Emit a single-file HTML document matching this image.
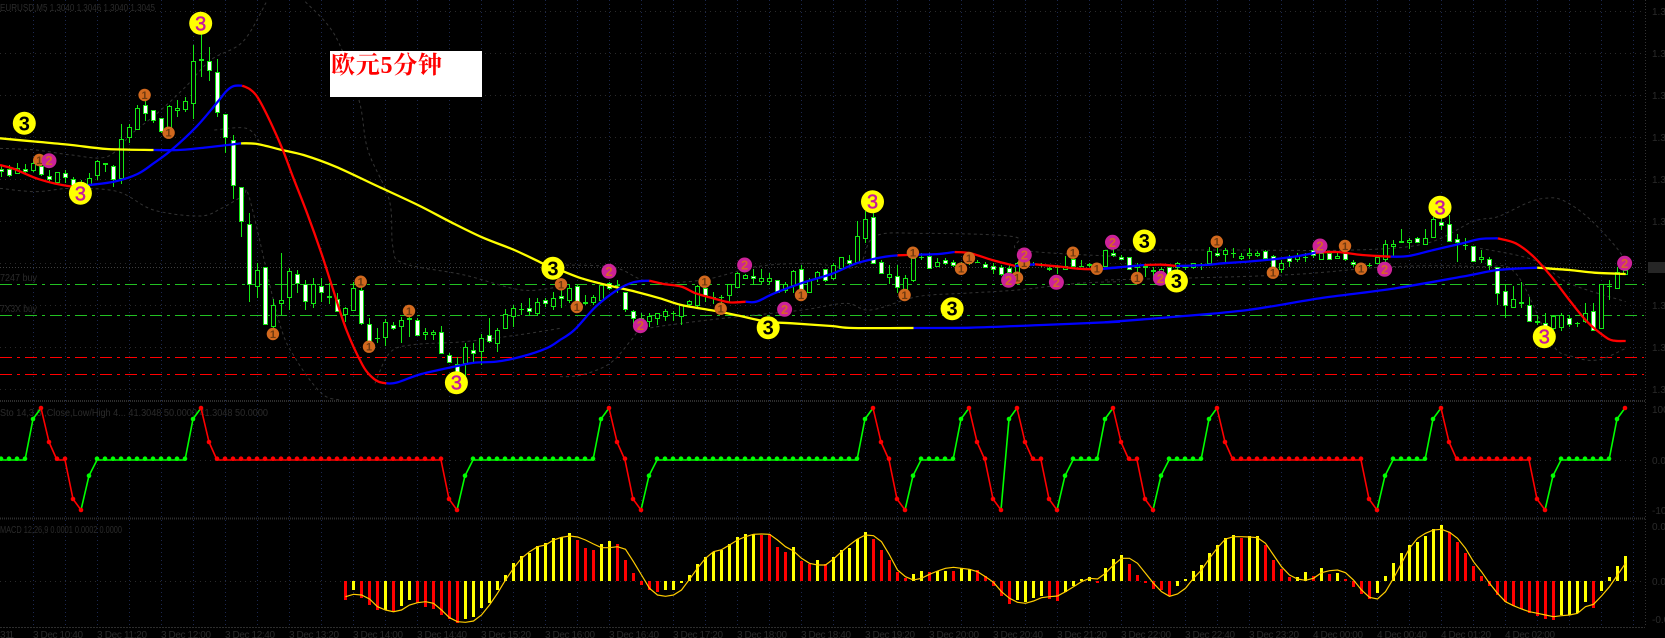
<!DOCTYPE html>
<html><head><meta charset="utf-8"><title>欧元5分钟</title>
<style>
html,body{margin:0;padding:0;background:#000;width:1665px;height:638px;overflow:hidden}
svg{position:absolute;left:0;top:0;display:block}
.lab{font:10px "Liberation Sans",sans-serif;fill:#2b2b2b}
.ma{fill:none;stroke-width:2.3;stroke-linejoin:round;vector-effect:non-scaling-stroke}
.bb{fill:none;stroke:#333;stroke-width:1;stroke-dasharray:3 3;vector-effect:non-scaling-stroke}
.y circle{fill:#ff0}
.y text{font:bold 20px "Liberation Sans",sans-serif;text-anchor:middle;fill:#000}
.y.m text{fill:#c8189c;font-weight:normal;stroke:#c8189c;stroke-width:.5}
.o circle{fill:#d2691e}
.o text{font:bold 11px "Liberation Sans",sans-serif;text-anchor:middle;fill:#6e3a10}
.p circle{fill:#cc2299}
.p text{font:bold 13px "Liberation Sans",sans-serif;text-anchor:middle;fill:#d8642a}
</style></head><body>
<svg width="1665" height="638" viewBox="0 0 1665 638" xmlns="http://www.w3.org/2000/svg">
<rect width="1665" height="638" fill="#000"/>
<g id="grid"></g>
<text class="lab" x="0" y="11" textLength="155" lengthAdjust="spacingAndGlyphs">EURUSD,M5 1.3040 1.3046 1.3040 1.3045</text>
<text class="lab" x="0" y="281" textLength="37" lengthAdjust="spacingAndGlyphs">7247 buy</text>
<text class="lab" x="0" y="312" textLength="37" lengthAdjust="spacingAndGlyphs">7X3X buy</text>
<text class="lab" x="0" y="416" textLength="268" lengthAdjust="spacingAndGlyphs">Sto 14,3,3 ,Close,Low/High 4... 41.3048 50.0000 41.3048 50.0000</text>
<text class="lab" x="0" y="533" textLength="122" lengthAdjust="spacingAndGlyphs">MACD 12,26,9 0.0001 0.0002 0.0000</text>
<g class="lab">
<text x="1652" y="15">1.30</text><text x="1652" y="57">1.30</text><text x="1652" y="99">1.30</text><text x="1652" y="141">1.30</text><text x="1652" y="183">1.30</text><text x="1652" y="225">1.30</text><text x="1652" y="309">1.30</text><text x="1652" y="351">1.30</text><text x="1652" y="393">1.30</text>
<text x="1652" y="413">100</text><text x="1652" y="464">0.00</text><text x="1652" y="514">-100</text>
<text x="1652" y="530">0.0</text><text x="1652" y="585">0.00</text><text x="1652" y="623">-0.0</text>
<text x="0" y="638" textLength="14">3 11</text><text x="33" y="638" textLength="50">3 Dec 10:40</text><text x="97" y="638" textLength="50">3 Dec 11:20</text><text x="161" y="638" textLength="50">3 Dec 12:00</text><text x="225" y="638" textLength="50">3 Dec 12:40</text><text x="289" y="638" textLength="50">3 Dec 13:20</text><text x="353" y="638" textLength="50">3 Dec 14:00</text><text x="417" y="638" textLength="50">3 Dec 14:40</text><text x="481" y="638" textLength="50">3 Dec 15:20</text><text x="545" y="638" textLength="50">3 Dec 16:00</text><text x="609" y="638" textLength="50">3 Dec 16:40</text><text x="673" y="638" textLength="50">3 Dec 17:20</text><text x="737" y="638" textLength="50">3 Dec 18:00</text><text x="801" y="638" textLength="50">3 Dec 18:40</text><text x="865" y="638" textLength="50">3 Dec 19:20</text><text x="929" y="638" textLength="50">3 Dec 20:00</text><text x="993" y="638" textLength="50">3 Dec 20:40</text><text x="1057" y="638" textLength="50">3 Dec 21:20</text><text x="1121" y="638" textLength="50">3 Dec 22:00</text><text x="1185" y="638" textLength="50">3 Dec 22:40</text><text x="1249" y="638" textLength="50">3 Dec 23:20</text><text x="1313" y="638" textLength="50">4 Dec 00:00</text><text x="1377" y="638" textLength="50">4 Dec 00:40</text><text x="1441" y="638" textLength="50">4 Dec 01:20</text><text x="1505" y="638" textLength="50">4 Dec 02:00</text>
</g>
<rect x="1648" y="262" width="17" height="11" fill="#262626"/>
<!-- level lines -->
<g fill="none" stroke-width="1" stroke-dasharray="12 5 3 5" shape-rendering="crispEdges">
<path d="M0 284.5H1644M0 315.5H1644" stroke="#22c022"/>
<path d="M0 357.5H1644M0 374.5H1644" stroke="#f00"/>
</g>
<path d="M0 267.5H1644" stroke="#404040" stroke-dasharray="1 2" fill="none" shape-rendering="crispEdges"/>
<!-- bollinger bands -->
<g transform="scale(.35714 .33333)">
<polyline class="bb" points="0,445 100,450 200,465 300,470 370,400 440,340 520,260 590,180 680,125 745,8"/>
<polyline class="bb" points="855,5 940,110 1005,300 1030,450 1090,600 1100,740 1130,790 1300,825 1460,870 1568,860"/>
<polyline class="bb" points="0,565 100,575 200,565 330,575 430,630 560,648 620,625 680,590 700,600 780,960 830,1080 900,1180 950,1200"/>
<polyline class="bb" points="1050,1150 1090,1060 1150,1035 1300,1025 1450,1005 1568,985"/>
<polyline class="bb" points="600,390 690,385 730,430"/>
</g>
<g transform="translate(560 150) scale(.35714 .33333)">
<polyline class="bb" points="0,345 150,352 250,395 400,390 550,350 700,340 830,350 880,260 1010,250 1270,260 1290,300 1568,320"/>
<polyline class="bb" points="0,680 60,675 140,640 200,570 230,540 340,520 500,500 680,480 800,460 870,480 1000,440 1130,430 1280,420 1450,400 1568,395"/>
</g>
<g transform="translate(1105 150) scale(.35714 .33333)">
<polyline class="bb" points="0,300 350,300 700,300 900,280 1030,215 1100,200 1180,160 1230,145 1280,150 1350,200 1430,290 1460,340"/>
<polyline class="bb" points="0,390 500,375 800,350 1050,350 1150,370 1250,580 1310,620 1380,630 1458,595"/>
<polyline class="bb" points="1050,295 1200,330 1300,400 1458,455"/>
</g>
<g id="candles" shape-rendering="crispEdges"></g>
<!-- moving averages -->
<g transform="scale(.35714 .33333)">
<polyline class="ma" stroke="#ff0" points="0,415 100,425 200,435 300,447 430,450"/>
<polyline class="ma" stroke="#00f" points="430,450 500,450 580,442 675,430"/>
<polyline class="ma" stroke="#ff0" points="675,430 720,432 790,450 850,465 940,500 1050,555 1170,615 1260,665 1350,712 1440,750 1515,788 1568,816"/>
<polyline class="ma" stroke="#f00" points="0,495 40,507 110,538 190,558 230,558"/>
<polyline class="ma" stroke="#00f" points="230,558 250,555 320,545 385,522 430,490 480,450 550,380 610,305 635,272 655,258 678,257"/>
<polyline class="ma" stroke="#f00" points="678,257 700,268 720,290 750,350 790,445 820,530 860,640 900,760 930,860 970,990 1015,1095 1040,1130 1060,1145 1082,1150"/>
<polyline class="ma" stroke="#00f" points="1082,1150 1110,1148 1180,1122 1280,1098 1330,1088 1390,1085 1460,1070 1530,1045 1568,1020"/>
</g>
<g transform="translate(560 150) scale(.35714 .33333)">
<polyline class="ma" stroke="#ff0" points="0,360 60,385 130,405 200,422 280,445 340,465 430,482 500,497 580,515 650,520 760,528 820,534 990,534"/>
<polyline class="ma" stroke="#00f" points="990,534 1150,533 1350,525 1568,515"/>
<polyline class="ma" stroke="#00f" points="0,570 40,540 100,470 160,420 205,397 250,392"/>
<polyline class="ma" stroke="#f00" points="250,392 290,402 340,410 380,430 430,445 475,457 520,455"/>
<polyline class="ma" stroke="#00f" points="520,455 550,455 600,430 680,398 760,372 830,340 900,322 945,316"/>
<polyline class="ma" stroke="#f00" points="945,316 1000,314"/>
<polyline class="ma" stroke="#00f" points="1000,314 1060,312 1105,306"/>
<polyline class="ma" stroke="#f00" points="1105,306 1150,310 1210,330 1275,348"/>
<polyline class="ma" stroke="#00f" points="1275,348 1330,343"/>
<polyline class="ma" stroke="#f00" points="1330,343 1350,345 1400,350 1450,356 1505,358"/>
<polyline class="ma" stroke="#00f" points="1505,358 1568,352"/>
</g>
<g transform="translate(1105 150) scale(.35714 .33333)">
<polyline class="ma" stroke="#00f" points="0,517 200,500 400,480 600,445 800,417 1000,380 1100,360 1210,353"/>
<polyline class="ma" stroke="#ff0" points="1210,353 1300,360 1370,368 1458,372"/>
<polyline class="ma" stroke="#00f" points="0,355 60,350 110,345"/>
<polyline class="ma" stroke="#f00" points="110,345 160,344 200,348"/>
<polyline class="ma" stroke="#00f" points="200,348 280,345 330,340 400,335 470,328 530,320 590,308"/>
<polyline class="ma" stroke="#f00" points="590,308 650,306 720,315 800,320"/>
<polyline class="ma" stroke="#00f" points="800,320 850,318 920,300 1000,280 1050,267 1100,265"/>
<polyline class="ma" stroke="#f00" points="1100,265 1150,280 1200,320 1250,380 1300,450 1350,515 1400,560 1425,572 1458,573"/>
</g>
<!-- orange markers -->
<g class="o" transform="translate(144.6 95)"><circle r="6.2"/><text y="4">1</text></g>
<g class="o" transform="translate(168.6 132.7)"><circle r="6.2"/><text y="4">1</text></g>
<g class="o" transform="translate(39.3 160)"><circle r="6.2"/><text y="4">1</text></g>
<g class="o" transform="translate(360.7 281.7)"><circle r="6.2"/><text y="4">1</text></g>
<g class="o" transform="translate(409 311)"><circle r="6.2"/><text y="4">1</text></g>
<g class="o" transform="translate(272.9 334)"><circle r="6.2"/><text y="4">1</text></g>
<g class="o" transform="translate(369 346.7)"><circle r="6.2"/><text y="4">1</text></g>
<g class="o" transform="translate(561 284.3)"><circle r="6.2"/><text y="4">1</text></g>
<g class="o" transform="translate(576.8 307)"><circle r="6.2"/><text y="4">1</text></g>
<g class="o" transform="translate(704.6 281.7)"><circle r="6.2"/><text y="4">1</text></g>
<g class="o" transform="translate(720.7 308.7)"><circle r="6.2"/><text y="4">1</text></g>
<g class="o" transform="translate(801 295)"><circle r="6.2"/><text y="4">1</text></g>
<g class="o" transform="translate(904.6 295)"><circle r="6.2"/><text y="4">1</text></g>
<g class="o" transform="translate(912.9 252.7)"><circle r="6.2"/><text y="4">1</text></g>
<g class="o" transform="translate(969 258)"><circle r="6.2"/><text y="4">1</text></g>
<g class="o" transform="translate(961 268.7)"><circle r="6.2"/><text y="4">1</text></g>
<g class="o" transform="translate(1017 277.7)"><circle r="6.2"/><text y="4">1</text></g>
<g class="o" transform="translate(1024 263)"><circle r="6.2"/><text y="4">1</text></g>
<g class="o" transform="translate(1072.9 252.7)"><circle r="6.2"/><text y="4">1</text></g>
<g class="o" transform="translate(1096.8 268.7)"><circle r="6.2"/><text y="4">1</text></g>
<g class="o" transform="translate(1137 278)"><circle r="6.2"/><text y="4">1</text></g>
<g class="o" transform="translate(1216.8 241.7)"><circle r="6.2"/><text y="4">1</text></g>
<g class="o" transform="translate(1272.9 272.7)"><circle r="6.2"/><text y="4">1</text></g>
<g class="o" transform="translate(1345 246)"><circle r="6.2"/><text y="4">1</text></g>
<g class="o" transform="translate(1361 268.7)"><circle r="6.2"/><text y="4">1</text></g>
<!-- magenta markers -->
<g class="p" transform="translate(49 160.7)"><circle r="7.5"/><text y="4.5">2</text></g>
<g class="p" transform="translate(609 271.3)"><circle r="7.5"/><text y="4.5">2</text></g>
<g class="p" transform="translate(744.6 265)"><circle r="7.5"/><text y="4.5">2</text></g>
<g class="p" transform="translate(640.4 325.7)"><circle r="7.5"/><text y="4.5">2</text></g>
<g class="p" transform="translate(784.6 309.3)"><circle r="7.5"/><text y="4.5">2</text></g>
<g class="p" transform="translate(1008.6 280.3)"><circle r="7.5"/><text y="4.5">2</text></g>
<g class="p" transform="translate(1024.3 255)"><circle r="7.5"/><text y="4.5">2</text></g>
<g class="p" transform="translate(1056.4 282.3)"><circle r="7.5"/><text y="4.5">2</text></g>
<g class="p" transform="translate(1112.5 242.3)"><circle r="7.5"/><text y="4.5">2</text></g>
<g class="p" transform="translate(1160.4 278.3)"><circle r="7.5"/><text y="4.5">2</text></g>
<g class="p" transform="translate(1320 246)"><circle r="7.5"/><text y="4.5">2</text></g>
<g class="p" transform="translate(1384.6 269.3)"><circle r="7.5"/><text y="4.5">2</text></g>
<g class="p" transform="translate(1624.6 263.3)"><circle r="7.5"/><text y="4.5">2</text></g>
<!-- yellow markers -->
<g class="y m" transform="translate(200.7 23.3)"><circle r="11.5"/><text y="7">3</text></g>
<g class="y" transform="translate(24.3 123.3)"><circle r="11.5"/><text y="7">3</text></g>
<g class="y m" transform="translate(80.4 193.3)"><circle r="11.5"/><text y="7">3</text></g>
<g class="y" transform="translate(552.9 268.3)"><circle r="11.5"/><text y="7">3</text></g>
<g class="y m" transform="translate(456.4 382.7)"><circle r="11.5"/><text y="7">3</text></g>
<g class="y m" transform="translate(872.5 201.7)"><circle r="11.5"/><text y="7">3</text></g>
<g class="y" transform="translate(768.2 327.7)"><circle r="11.5"/><text y="7">3</text></g>
<g class="y" transform="translate(952.1 308.7)"><circle r="11.5"/><text y="7">3</text></g>
<g class="y" transform="translate(1144.3 241)"><circle r="11.5"/><text y="7">3</text></g>
<g class="y" transform="translate(1176.4 281)"><circle r="11.5"/><text y="7">3</text></g>
<g class="y m" transform="translate(1440 207.3)"><circle r="11.5"/><text y="7">3</text></g>
<g class="y m" transform="translate(1544.3 336.7)"><circle r="11.5"/><text y="7">3</text></g>
<!-- title box -->
<rect x="330" y="51" width="152" height="46" fill="#fff"/>
<text x="331" y="73" font-size="24" font-weight="700" fill="#f00" textLength="111" font-family="'Liberation Serif','Noto Serif CJK SC',serif">欧元5分钟</text>
<g id="stoch"></g>
<g id="macd"></g>
</svg>
<script>
(function(){
var NS='http://www.w3.org/2000/svg';
function el(p,n,a){var e=document.createElementNS(NS,n);for(var k in a)e.setAttribute(k,a[k]);document.getElementById(p).appendChild(e);return e;}
function X(i){return 1+8*i;}
/* smooth moving averages and bands */
Array.prototype.slice.call(document.querySelectorAll('polyline.ma,polyline.bb')).forEach(function(pl){
 var p=pl.getAttribute('points').split(' ').map(function(s){return s.split(',').map(Number);});
 var d='M'+p[0][0]+' '+p[0][1];
 for(var i=0;i<p.length-1;i++){
  var a=p[Math.max(i-1,0)],b=p[i],c=p[i+1],e=p[Math.min(i+2,p.length-1)];
  d+='C'+(b[0]+(c[0]-a[0])/6).toFixed(1)+' '+(b[1]+(c[1]-a[1])/6).toFixed(1)+' '+(c[0]-(e[0]-b[0])/6).toFixed(1)+' '+(c[1]-(e[1]-b[1])/6).toFixed(1)+' '+c[0]+' '+c[1];
 }
 var q=document.createElementNS(NS,'path');
 q.setAttribute('d',d);q.setAttribute('class',pl.getAttribute('class'));
 if(pl.getAttribute('stroke'))q.setAttribute('stroke',pl.getAttribute('stroke'));
 pl.parentNode.replaceChild(q,pl);
});
/* grid */
var d='';
for(var k=1;k<=51;k++){d+='M'+(1+32*k+.5)+' 0V627';}
el('grid','path',{d:d,stroke:'#1c2850','stroke-dasharray':'1 3',fill:'none','shape-rendering':'crispEdges'});
d='';
[11,53,95,137,179,221,263,305,347,389,460,581].forEach(function(y){d+='M0 '+(y+.5)+'H1645';});
el('grid','path',{d:d,stroke:'#2a2a2a','stroke-dasharray':'1 4',fill:'none','shape-rendering':'crispEdges'});
el('grid','path',{d:'M1645.5 0V627',stroke:'#333','stroke-dasharray':'1 2',fill:'none','shape-rendering':'crispEdges'});
el('grid','path',{d:'M0 401H1645M0 518.5H1645',stroke:'#2e2e2e','stroke-width':2,'stroke-dasharray':'1 1',fill:'none','shape-rendering':'crispEdges'});
el('grid','path',{d:'M0 627.5H1645',stroke:'#2e2e2e','stroke-dasharray':'2 1',fill:'none','shape-rendering':'crispEdges'});
/* candles */
var A=[[495,508,514,530,1],[495,508,526,532,1],[490,505,520,522,0],[493,508,514,520,1],[480,488,510,515,0],[480,497,522,527,1],[510,527,538,545,1],[515,515,545,545,0],[510,520,532,550,1],[530,538,555,560,1],[540,545,565,570,1],[520,533,555,560,0],[480,482,525,540,0],[488,488,491,515,0],[495,499,538,560,1],[373,418,533,552,0],[372,382,412,430,0],[315,325,388,390,0],[285,316,338,362,1],[331,331,361,368,1],[355,355,394,400,1],[315,317,385,395,0],[300,325,331,350,0],[292,304,326,335,0],[135,184,310,356,0],[100,178,180,230,0],[142,184,211,242,1],[178,217,337,350,1],[343,343,412,458,1],[405,419,556,597,1],[562,562,664,710,1],[640,671,853,905,1],[790,809,859,895,0],[802,802,973,975,1],[897,916,979,985,0],[760,899,910,945,0],[805,814,892,930,0],[810,821,848,880,1],[840,853,904,930,1],[835,853,910,925,0],[835,859,877,905,1],[850,887,891,912,0],[880,898,934,935,1],[920,923,941,965,0],[845,865,929,930,0],[855,871,968,975,1],[955,973,1027,1040,1],[985,1015,1015,1030,0],[958,967,1012,1037,0],[965,974,985,990,1],[950,961,979,1030,0],[940,955,957,1010,0],[955,961,1004,1004,1],[985,997,1003,1020,0],[990,997,1003,1020,0],[978,997,1060,1062,1],[1060,1066,1087,1090,1],[1070,1093,1115,1135,1],[1030,1042,1090,1130,0],[1030,1049,1060,1090,1],[1003,1013,1054,1095,0],[955,1006,1024,1028,1],[985,991,1030,1055,0],[928,941,985,985,0],[915,923,947,980,0],[910,928,928,945,0],[895,923,933,947,1],[895,905,940,947,0],[895,900,910,922,1],[877,893,917,930,0]];
var B=[[405,437,443,475,1],[405,415,450,460,0],[405,408,455,485,1],[435,455,460,465,1],[435,442,455,465,0],[400,405,450,450,0],[395,400,415,420,1],[390,405,405,430,0],[427,427,478,485,1],[480,484,505,525,1],[490,505,505,530,0],[490,497,512,530,0],[490,490,505,525,0],[477,484,497,513,0],[483,490,490,513,0],[462,466,497,525,0],[450,454,462,470,0],[405,408,466,470,0],[405,415,435,455,1],[425,440,440,462,0],[435,441,441,460,0],[403,403,436,455,0],[365,370,410,415,0],[372,375,385,385,0],[358,379,385,405,1],[358,385,392,403,0],[370,385,392,403,0],[391,391,425,430,1],[395,403,420,430,0],[360,363,405,430,0],[345,358,420,430,1],[385,391,425,430,0],[362,365,385,395,0],[358,358,391,395,1],[340,346,385,390,0],[320,322,353,355,0],[315,329,340,345,1],[212,259,335,337,0],[182,208,265,280,0],[190,202,340,342,1],[330,335,370,372,1],[345,371,380,403,0],[345,379,410,428,1],[375,385,417,430,0],[310,325,391,395,0],[310,320,320,330,0],[310,317,353,355,1],[325,335,347,352,0],[325,329,340,345,1],[330,335,345,350,1],[335,340,350,355,0],[330,335,340,345,0],[330,335,335,340,0],[335,341,352,355,1],[340,347,357,372,1],[345,352,372,378,1],[345,353,365,390,1],[335,340,365,370,0],[338,343,347,352,0],[335,341,341,348,0],[338,341,345,350,0],[350,353,358,362,1],[345,350,350,372,0],[318,347,358,360,0],[318,328,347,352,1],[330,347,347,352,0],[338,341,346,350,1],[340,350,355,360,0],[300,300,347,352,0],[290,310,315,320,1],[315,322,328,330,1],[322,322,358,360,1],[340,345,352,365,0],[345,347,350,380,0],[350,360,364,385,0],[350,358,365,375,0],[350,352,372,375,1],[335,340,350,360,0],[345,350,350,360,0],[338,340,352,358,0],[340,345,345,360,0],[290,302,340,345,0],[295,310,315,320,1],[295,300,311,335,0],[295,310,310,325,0],[310,317,324,330,0],[293,310,316,328,0],[303,310,316,320,0],[300,302,323,325,1],[315,317,360,385,1],[330,340,358,370,0],[315,323,334,352,1],[310,317,328,335,0],[310,322,322,335,0],[295,300,315,325,1],[300,310,328,330,0],[308,310,328,330,1],[305,317,323,328,0],[300,310,328,333,1],[330,335,341,352,1],[338,345,345,352,0],[340,345,345,350,0],[318,322,340,342,0],[270,283,328,340,0],[270,283,289,320,0],[238,272,277,280,0],[265,270,277,297,0],[260,265,277,280,1],[238,265,283,285,0],[200,208,260,262,0],[205,215,226,240,1],[195,222,272,272,1],[252,266,277,335,1],[265,284,284,300,0],[288,289,334,335,1],[300,322,328,340,0],[322,328,346,360,1],[352,352,428,465,1],[403,422,466,505,1],[408,448,472,475,0],[397,455,460,475,0],[440,466,512,515,1],[495,512,516,525,0],[490,518,535,545,1],[495,497,535,540,0],[490,495,530,542,0],[495,505,523,530,1],[515,518,518,530,0],[460,490,512,520,0],[460,484,540,542,1],[403,403,535,536,0],[390,408,408,450,0],[350,365,415,415,0],[350,360,372,375,0]];
var G='',W='',K='';
function add(arr,off,start){
 arr.forEach(function(c,n){
  var x=X(start+n),t=Math.round(off+c[0]/3),a=Math.round(off+c[1]/3),b=Math.round(off+c[2]/3),e=Math.round(off+c[3]/3);
  G+='M'+x+' '+t+'h1V'+e+'h-1z';
  if(b-a<1){G+='M'+(x-2)+' '+a+'h5v1h-5z';return;}
  G+='M'+(x-2)+' '+a+'h5V'+(b+1)+'h-5z';
  if(b-a>=2){var s='M'+(x-1)+' '+(a+1)+'h3V'+b+'h-3z';if(c[4])W+=s;else K+=s;}
 });
}
add(A,0,0);add(B,150,70);
el('candles','path',{d:G,fill:'#14e814'});
el('candles','path',{d:K,fill:'#000'});
el('candles','path',{d:W,fill:'#fff'});
/* stochastic */
function rep(c,n){return new Array(n+1).join(c);}
var S='gggg'+'HTUrrDBL'+rep('g',12)+'HTU'+rep('r',29)+'DBL'+rep('g',16)+'HTUrDBL'+rep('g',26)+'HTUrDBL'+rep('g',5)+'HTUrDBHTUrrDBL'+rep('g',4)+'HTUrrDBL'+rep('g',5)+'HTU'+rep('r',17)+'DBL'+rep('g',5)+'HTU'+rep('r',10)+'DBL'+rep('g',7)+'HT';
var L={T:408,H:419,U:442,g:460,r:460,L:475.7,D:499,B:510};
var segG='',segR='';
for(var i=0;i<S.length-1;i++){
 var y1=L[S[i]],y2=L[S[i+1]],s='M'+X(i)+' '+y1+'L'+X(i+1)+' '+y2;
 var up=y2<y1,flat=y1==y2;
 if(up||(flat&&S[i]=='g'))segG+=s;else segR+=s;
}
el('stoch','path',{d:segR,stroke:'#f00','stroke-width':1.6,fill:'none'});
el('stoch','path',{d:segG,stroke:'#0f0','stroke-width':1.6,fill:'none'});
for(i=0;i<S.length;i++){
 var ch=S[i],col=(ch=='g'||ch=='H'||ch=='L')?'#0f0':'#f00',yy=(ch=='g'||ch=='r')?458.7:L[ch];
 el('stoch','circle',{cx:X(i),cy:yy,r:2.3,fill:col});
}
/* MACD */
var H=[-615,585,-608,-630,-645,645,-647,633,615,-625,-635,-642,-660,-672,-683,672,665,638,625,585,540,503,483,473,453,444,429,
427,414,-435,-459,-465,447,438,-447,-495,-533,-570,-585,-592,585,585,565,540,507,486,471,465,447,426,417,417,-420,-417,-456,-471,456,-498,-507,495,-507,486,465,459,432,411,-432,-465,-495,-531,-549,537,528,-531,528,528,-528,519,522,-525,-543,-573,-603,-627,615,620,610,603,-612,-618,591,573,552,546,-564,519,492,
480,-507,-540,-564,-582,-585,-604,573,552,528,510,474,450,429,421,-429,423,423,-450,-495,-522,-546,546,531,-543,519,-537,534,-552,-576,-597,-612,594,543,504,474,450,441,423,402,390,-412,-441,-474,-513,-543,-573,-600,-621,-633,-642,-654,-663,-672,-675,660,660,654,621,-639,588,545,513,483];
var Sg=[605,598,600,612,635,645,650,645,630,623,620,625,645,668,680,682,678,660,630,595,555,520,490,470,455,450,435,
427,423,426,435,447,458,458,455,463,500,540,580,600,604,600,585,553,520,490,470,464,450,435,425,418,417,418,435,455,468,490,505,510,510,492,470,450,432,420,422,440,480,525,545,555,550,538,528,520,517,520,523,530,545,562,590,610,622,625,618,608,605,603,590,575,560,550,552,535,510,
490,490,505,535,565,590,604,597,580,550,525,490,458,432,425,425,426,428,445,480,515,540,552,556,550,533,527,525,533,555,585,607,612,590,550,505,460,430,415,405,403,412,430,460,500,530,565,595,620,632,642,650,655,660,665,662,660,655,635,628,603,575,540,505];
var hy='',hr='';
H.forEach(function(v,n){
 var x=X(43+n)-1,z=Math.abs(v),y=Math.round(395+z/3),s='M'+x+' '+Math.min(y,581)+'h3V'+Math.max(y,581)+'h-3z';
 if(v<0)hr+=s;else hy+=s;
});
el('macd','path',{d:hy,fill:'#ff0','shape-rendering':'crispEdges'});
el('macd','path',{d:hr,fill:'#f00','shape-rendering':'crispEdges'});
var pts=Sg.map(function(v,n){return (X(43+n)+.5)+','+(395+v/3).toFixed(1);}).join(' ');
el('macd','polyline',{points:pts,fill:'none',stroke:'#ffcc00','stroke-width':1.2});
})();
</script>
</body></html>
